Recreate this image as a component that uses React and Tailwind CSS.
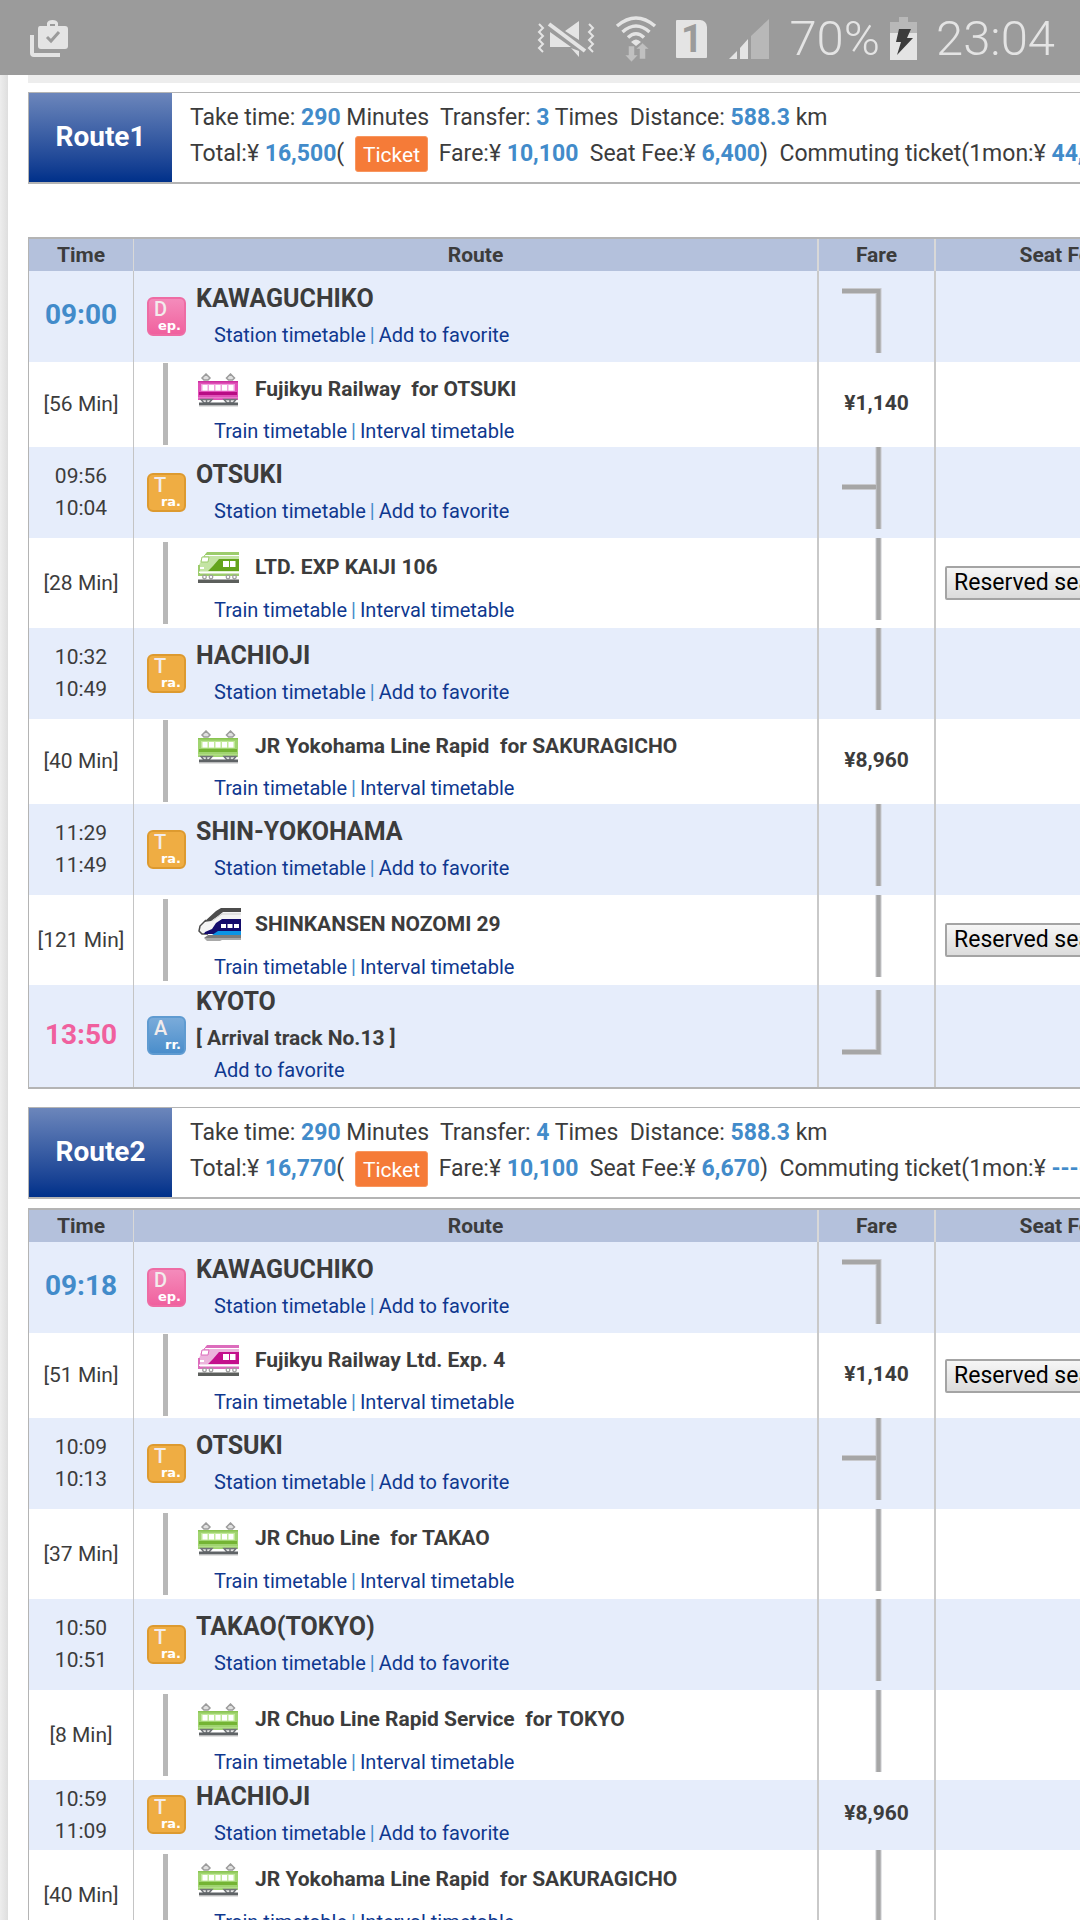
const ROUTES = [
  {
    name: 'Route1',
    minutes: '290',
    transfers: '3',
    distance: '588.3',
    total: '16,500',
    fare: '10,100',
    seatFee: '6,400',
    commuting: '44,820',
    wideGap: true,
    rows: [
      { kind: 'dep', times: ['09:00'], name: 'KAWAGUCHIKO', line: 'start' },
      { kind: 'train', icon: 'pinkLocal', duration: '56', name: 'Fujikyu Railway\u00a0 for OTSUKI', fare: '¥1,140' },
      { kind: 'tra', times: ['09:56', '10:04'], name: 'OTSUKI', line: 'branch' },
      { kind: 'train', icon: 'greenExpress', duration: '28', name: 'LTD. EXP KAIJI 106', line: 'through', seat: true, tall: true },
      { kind: 'tra', times: ['10:32', '10:49'], name: 'HACHIOJI', line: 'through' },
      { kind: 'train', icon: 'greenLocal', duration: '40', name: 'JR Yokohama Line Rapid\u00a0 for SAKURAGICHO', fare: '¥8,960' },
      { kind: 'tra', times: ['11:29', '11:49'], name: 'SHIN-YOKOHAMA', line: 'through' },
      { kind: 'train', icon: 'shinkansen', duration: '121', name: 'SHINKANSEN NOZOMI 29', line: 'through', seat: true, tall: true },
      { kind: 'arr', times: ['13:50'], name: 'KYOTO', track: '[ Arrival track No.13 ]', line: 'end' },
    ],
  },
  {
    name: 'Route2',
    minutes: '290',
    transfers: '4',
    distance: '588.3',
    total: '16,770',
    fare: '10,100',
    seatFee: '6,670',
    commuting: '-----',
    rows: [
      { kind: 'dep', times: ['09:18'], name: 'KAWAGUCHIKO', line: 'start' },
      { kind: 'train', icon: 'pinkExpress', duration: '51', name: 'Fujikyu Railway Ltd. Exp. 4', fare: '¥1,140', seat: true },
      { kind: 'tra', times: ['10:09', '10:13'], name: 'OTSUKI', line: 'branch' },
      { kind: 'train', icon: 'greenLocal', duration: '37', name: 'JR Chuo Line\u00a0 for TAKAO', line: 'through', tall: true },
      { kind: 'tra', times: ['10:50', '10:51'], name: 'TAKAO(TOKYO)', line: 'through' },
      { kind: 'train', icon: 'greenLocal', duration: '8', name: 'JR Chuo Line Rapid Service\u00a0 for TOKYO', line: 'through', tall: true },
      { kind: 'tra', times: ['10:59', '11:09'], name: 'HACHIOJI', fare: '¥8,960' },
      { kind: 'train', icon: 'greenLocal', duration: '40', name: 'JR Yokohama Line Rapid\u00a0 for SAKURAGICHO', line: 'through', tall: true },
    ],
  },
]

const BADGES = {
  dep: { big: 'D', small: 'ep.', cls: 'bg-linear-to-b from-[#f48bbb] to-[#f0609e] border-[#ee6ca4]' },
  tra: { big: 'T', small: 'ra.', cls: 'bg-[#efad43] border-[#dd9a2f]' },
  arr: { big: 'A', small: 'rr.', cls: 'bg-linear-to-b from-[#7aabda] to-[#4a8ecb] border-[#5f9bd1]' },
}

const PINK = { light: '#ecb4dc', mid: '#dc6cbc', dark: '#c4108c' }
const LOCAL_PINK = { light: '#f0a0dc', mid: '#e050b8', dark: '#b80c84' }
const GREEN = { light: '#c4e4a4', mid: '#9ccc6c', dark: '#64a41c' }
const LOCAL_GREEN = { light: '#c0e898', mid: '#a0d470', dark: '#74b434' }

function LocalTrain({ c }) {
  return (
    <svg width="41" height="34" viewBox="0 0 41 34">
      <g fill="#e0e0e0" stroke="#9c9c9c" strokeWidth="1.5">
        <path d="M8 1L4 5L6 7H10L12 5Z" />
        <path d="M32.5 1L28.5 5L30.5 7H34.5L36.5 5Z" />
      </g>
      <rect x="0" y="8" width="40" height="19" fill={c.mid} />
      <rect x="0" y="8" width="40" height="1.5" fill={c.dark} opacity=".5" />
      <rect x="3" y="11" width="34" height="7" fill={c.light} />
      {[4.5, 11, 17.5, 24, 30.5].map(x => (
        <rect key={x} x={x} y="12" width="5" height="5.500" fill="#fff" />
      ))}
      <rect x="1" y="19" width="38" height="3" fill={c.dark} />
      <rect x="0" y="24" width="40" height="1.5" fill={c.light} opacity=".5" />
      <g fill="#e4e4e4" stroke="#6f7377" strokeWidth="1.5">
        <path d="M3 26.500H14L11 30H6ZM26 26.500H38L35 30H29Z" />
        <path d="M8.500 26.500V30M32 26.500V30" />
      </g>
      <rect x="1" y="29.5" width="39" height="3" fill="#5f6366" />
      <rect x="1" y="32.5" width="39" height="1" fill="#c4c4c4" />
    </svg>
  )
}

function ExpressTrain({ c }) {
  return (
    <svg width="41" height="32" viewBox="0 0 41 32">
      <path d="M9 0H41V2.5H7Z" fill={c.mid} />
      <path d="M6 4H41V20H0V15L3 9Z" fill={c.light} />
      <path d="M7 2.5H41M3 9L7 3" stroke={c.mid} fill="none" />
      <path d="M21 7H41V19H10L15 14Z" fill={c.dark} />
      <rect x="25" y="9" width="6" height="6" fill="#fff" />
      <rect x="32" y="9" width="5.5" height="6" fill="#fff" />
      <path d="M4 5H11L10 10H3Z" fill="#fff" stroke={c.mid} />
      <path d="M1 13V22" stroke={c.mid} strokeWidth="2" />
      <rect x="2" y="15" width="4" height="2" fill="#fff" />
      <rect x="1" y="19.5" width="40" height="1.5" fill="#fff" />
      <rect x="0" y="21.5" width="41" height="2.5" fill={c.mid} />
      <g fill="none" stroke="#a0a0a0" strokeWidth="1.3">
        <circle cx="6.5" cy="25" r="1.8" />
        <circle cx="13" cy="25" r="1.8" />
        <circle cx="30" cy="25" r="1.8" />
        <circle cx="36.5" cy="25" r="1.8" />
      </g>
      <rect x="0" y="27.5" width="41" height="3.5" fill="#5c5f5c" />
    </svg>
  )
}

function Shinkansen() {
  return (
    <svg width="43" height="34" viewBox="0 0 43 34">
      <path d="M43 3H25L8 14L2 19L1 23L5 27H10L22 11H43Z" fill="#f4f4f4" />
      <path d="M8 12L2 18L1 23L4 26H10" fill="none" stroke="#4c4c4c" strokeWidth="1.5" />
      <path d="M43 0H23L18 3L6 14L13 13L20 8L25 4H43Z" fill="#4c4c4c" />
      <path d="M24 6H43M14 13L24 6" fill="none" stroke="#d0d0d0" />
      <path d="M43 11H24L18 15L14 21L7 24L6 26H43Z" fill="#140c6c" />
      <rect x="23" y="16" width="5" height="4" fill="#fff" />
      <rect x="29.5" y="16" width="5" height="4" fill="#fff" />
      <rect x="36" y="16" width="5" height="4" fill="#fff" />
      <path d="M20 23H43V27H14Z" fill="#0c94e4" />
      <path d="M10 27H43V30H6Z" fill="#7c7c7c" />
      <path d="M6 30L9 33H22L24 32H43V30Z" fill="#a8a8a8" />
    </svg>
  )
}

function TrainIcon({ type }) {
  if (type === 'pinkLocal') return <LocalTrain c={LOCAL_PINK} />
  if (type === 'greenLocal') return <LocalTrain c={LOCAL_GREEN} />
  if (type === 'pinkExpress') return <ExpressTrain c={PINK} />
  if (type === 'greenExpress') return <ExpressTrain c={GREEN} />
  return <Shinkansen />
}

const FARE_PATHS = {
  start: 'M0 20H36.5V82',
  branch: 'M0 40H34M36.5 0V82',
  through: 'M36.5 0V82',
  end: 'M36.5 5V67H0',
}

function FareLine({ type }) {
  return (
    <svg width="40" height="82" viewBox="0 0 40 82" fill="none" className="ml-[23px]">
      <path d={FARE_PATHS[type]} stroke="#c9cace" strokeWidth="6" />
      <path d={FARE_PATHS[type]} stroke="#a6a6a6" strokeWidth="4" />
    </svg>
  )
}

function StatusBar() {
  return (
    <header className="flex h-[75px] shrink-0 items-center justify-between bg-[#9b9b9b] pt-[2px] pr-[25px] pl-[30px] text-[#e4e4e4]">
      <svg width="38" height="37" viewBox="0 0 38 37">
        <path d="M2 15V33Q2 35 4 35H30" fill="none" stroke="currentColor" strokeWidth="4" />
        <path fillRule="evenodd" fill="currentColor" d="M10 6H17V3Q18 0 22.5 0T28 3V6H35Q38 6 38 9V26Q38 29 35 29H11Q8 29 8 26V9Q8 6 10 6ZM20 6H25V4H20Z" />
        <path d="M17 17L21 21L29 12" fill="none" stroke="#9b9b9b" strokeWidth="3" />
      </svg>
      <div className="flex items-center">
        <svg width="58" height="38" viewBox="0 0 58 38" fill="none" stroke="currentColor" strokeWidth="2">
          <path d="M2 4L6 8L2 12L6 16L2 20L6 24L2 28L6 32M52 4L56 8L52 12L56 16L52 20L56 24L52 28L56 32" />
          <path d="M42 1V20L28 11ZM13 12L34 27H13ZM34 28L42 31V37Z" fill="currentColor" stroke="none" />
          <path d="M12 4L48 31" strokeWidth="4" />
        </svg>
        <svg width="42" height="46" viewBox="0 0 42 46" className="ml-5" fill="none" stroke="currentColor" strokeWidth="3.5">
          <path d="M2 10Q21 -6 40 10M7.5 16Q21 4 34.5 16M13 21.5Q21 14 29 21.5" />
          <path d="M21 30L16 26Q21 21 26 26Z" fill="currentColor" stroke="none" />
          <path d="M13.5 30H19.5V39H23L16.5 46L10 39H13.5ZM24.5 43V33H21L27.5 27L34 33H30.5V43Z" fill="#c0c0c0" stroke="#9b9b9b" strokeWidth=".5" />
        </svg>
        <div className="ml-[19px] flex h-[38px] w-[31px] items-center justify-center rounded-[1px] rounded-tr-[7px] bg-[#e4e4e4] text-[38px] leading-[38px] font-bold text-[#9b9b9b]">1</div>
        <svg width="40" height="40" viewBox="0 0 40 40" className="ml-[22px]">
          <path d="M0 40L8 32V40ZM11 29L19 20V40H11Z" fill="currentColor" />
          <path d="M22 17L40 0V40H22Z" fill="#b8b8b8" />
        </svg>
        <span className="ml-5 text-[49px] leading-[56px] font-light">70%</span>
        <svg width="27" height="43" viewBox="0 0 27 43" className="ml-[10px]">
          <path d="M9 0H18V5H27V17H0V5H9Z" fill="#b8b8b8" />
          <path d="M0 16H27V43H0Z" fill="currentColor" />
          <path d="M9 12H21L17 21H23L7 38L11 25H6Z" fill="#3c3c3c" />
        </svg>
        <span className="ml-[19px] text-[49px] leading-[56px] font-light">23:04</span>
      </div>
    </header>
  )
}

function Blue({ children }) {
  return <b className="font-bold text-[#428bca]">{children}</b>
}

function RouteSummary({ route }) {
  return (
    <section className="flex h-[92px] border border-r-0 border-b-2 border-[#b4b4b4]">
      <h2 className="flex w-[143px] shrink-0 items-center justify-center bg-linear-to-b from-[#6c86bb] to-[#00308a] pb-[2px] text-[28px] font-bold text-white">
        {route.name}
      </h2>
      <div className="pt-[7px] pl-[18px] text-[23px] leading-[36px] whitespace-pre">
        <p>
          Take time: <Blue>{route.minutes}</Blue>{' Minutes  Transfer: '}
          <Blue>{route.transfers}</Blue>{' Times  Distance: '}
          <Blue>{route.distance}</Blue> km
        </p>
        <p className="flex items-center">
          <span>Total:¥ <Blue>{route.total}</Blue>( </span>
          <a href="#ticket" className="mx-[5px] h-[36px] rounded-[3px] border border-[#f8965f] bg-[#f57b38] px-[7px] text-[21px] leading-[36px] text-white">Ticket</a>
          <span>
            {' Fare:¥ '}<Blue>{route.fare}</Blue>{'  Seat Fee:¥ '}
            <Blue>{route.seatFee}</Blue>{')  Commuting ticket(1mon:¥ '}
            <Blue>{route.commuting}</Blue>)
          </span>
        </p>
      </div>
    </section>
  )
}

function Links({ items }) {
  return (
    <div className="pl-[18px] text-[20px] leading-[32px] text-[#428bca]">
      {items.map((item, i) => (
        <span key={item}>
          {i > 0 && <span className="px-1">|</span>}
          <a href="#link" className="text-[#0f388f]">{item}</a>
        </span>
      ))}
    </div>
  )
}

function Badge({ kind }) {
  const b = BADGES[kind]
  return (
    <div className={`ml-[13px] h-[39px] w-[39px] rounded-[6px] border-2 text-white ${b.cls}`}>
      <div className="pl-[5px] text-[20px] leading-[21px] font-medium text-[#f2ecec]">{b.big}</div>
      <div className="pr-[3px] text-right font-['DejaVu_Sans'] text-[13px] leading-[11px] font-bold">{b.small}</div>
    </div>
  )
}

function TimeCell({ row }) {
  if (row.kind === 'train') return `[${row.duration} Min]`
  if (row.kind === 'dep') return <span className="text-[28px] font-bold text-[#428bca]">{row.times[0]}</span>
  if (row.kind === 'arr') return <span className="text-[28px] font-bold text-[#f0609e]">{row.times[0]}</span>
  return row.times.map(t => <div key={t}>{t}</div>)
}

function Row({ row }) {
  const isTrain = row.kind === 'train'
  // a priced station row carries no connector, so it stays at its text height
  const height = isTrain
    ? (row.tall ? 'h-[90px]' : 'h-[85px]')
    : row.track ? 'h-[102px]' : row.fare ? 'h-[70px]' : 'h-[91px]'

  return (
    <tr className={`${height} ${isTrain ? 'bg-white' : 'bg-[#e6edfb]'}`}>
      <td className="border-r border-[#c4c4c4] pb-px text-center text-[21px] leading-[32px]"><TimeCell row={row} /></td>
      <td className="pb-px">
        {isTrain ? <div className="ml-[29px] h-[82px] w-[5px] bg-[#b8b8b8]" /> : <Badge kind={row.kind} />}
      </td>
      <td className="border-r-2 border-[#c9c9c9]">
        {isTrain ? (
          <>
            <div className="flex h-[53px] items-center pt-[2px] text-[21px] font-bold">
              <span className="w-[59px] shrink-0 pl-[2px]"><TrainIcon type={row.icon} /></span>
              {row.name}
            </div>
            <Links items={['Train timetable', 'Interval timetable']} />
          </>
        ) : (
          <>
            <div className="pb-1 text-[25px] leading-[32px] font-bold">{row.name}</div>
            {row.track && <div className="text-[21px] leading-[32px] font-bold">{row.track}</div>}
            <Links items={row.track ? ['Add to favorite'] : ['Station timetable', 'Add to favorite']} />
          </>
        )}
      </td>
      <td className={`border-r-2 border-[#c9c9c9] text-[21px] font-bold ${row.line ? 'align-top' : 'pb-[2px] text-center'}`}>
        {row.line ? <FareLine type={row.line} /> : row.fare}
      </td>
      <td>
        {row.seat && (
          <button type="button" className="ml-[9px] h-[34px] rounded-[2px] border-2 border-[#a4a4a4] bg-linear-to-b from-[#f6f6f6] to-[#dcdcdc] px-[7px] text-[23px] leading-[28px] text-black">
            Reserved seat
          </button>
        )}
      </td>
    </tr>
  )
}

function RouteTable({ rows }) {
  return (
    <table className="w-full min-w-[1157px] table-fixed border-separate border-spacing-0 border-y-2 border-l border-[#b4b4b4]">
      <colgroup>
        <col className="w-[105px]" />
        <col className="w-[62px]" />
        <col className="w-[623px]" />
        <col className="w-[117px]" />
        <col />
      </colgroup>
      <thead>
        <tr className="h-[32px] bg-[#b4c1dc] text-[21px] leading-[32px]">
          <th className="border-r border-[#d8d8d8]">Time</th>
          <th colSpan={2} className="border-r-2 border-[#d8d8d8]">Route</th>
          <th className="border-r-2 border-[#d8d8d8]">Fare</th>
          <th>Seat Fee</th>
        </tr>
      </thead>
      <tbody>
        {rows.map((row, i) => <Row key={i} row={row} />)}
      </tbody>
    </table>
  )
}

export default function App() {
  return (
    <div className="flex h-screen flex-col overflow-hidden bg-white font-['Roboto',sans-serif] text-[#3c3c3c]">
      <StatusBar />
      <div className="flex min-h-0 flex-1">
        <div className="w-2 shrink-0 bg-linear-to-r from-[#ededed] to-[#dedede]" />
        <main className="min-w-0 flex-1 overflow-hidden pl-5">
          <div className="mb-[9px] h-2 bg-[#ededed]" />
          {ROUTES.map(route => (
            <div key={route.name} className="mb-[18px]">
              <RouteSummary route={route} />
              <div className={route.wideGap ? 'mt-[53px]' : 'mt-[9px]'}>
                <RouteTable rows={route.rows} />
              </div>
            </div>
          ))}
        </main>
      </div>
    </div>
  )
}
